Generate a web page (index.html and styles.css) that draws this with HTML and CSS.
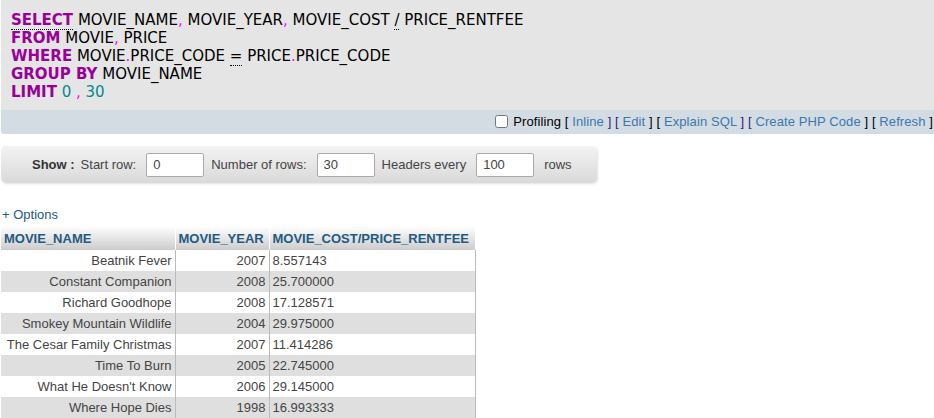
FILE: index.html
```html
<!DOCTYPE html>
<html>
<head>
<meta charset="utf-8">
<link rel="stylesheet" href="styles.css">
</head>
<body>
<div class="sqlbox">
  <div class="sql">
    <div class="line"><span class="kw ab">SELECT</span> MOVIE_NAME<span class="pn">,</span> MOVIE_YEAR<span class="pn">,</span> MOVIE_COST <span class="op ab">/</span> PRICE_RENTFEE</div>
    <div class="line"><span class="kw">FROM</span> MOVIE<span class="pn">,</span> PRICE</div>
    <div class="line"><span class="kw">WHERE</span> MOVIE<span class="pn">.</span>PRICE_CODE <span class="op ab">=</span> PRICE<span class="pn">.</span>PRICE_CODE</div>
    <div class="line"><span class="kw">GROUP BY</span> MOVIE_NAME</div>
    <div class="line"><span class="kw">LIMIT</span> <span class="num">0</span> <span class="pn">,</span> <span class="num">30</span></div>
  </div>
  <div class="tools">
    <input type="checkbox" class="chk"> Profiling <span class="br">[</span> <a class="lnk">Inline</a> <span class="br v">]</span> <span class="br v">[</span> <a class="lnk">Edit</a> <span class="br">]</span> <span class="br">[</span> <a class="lnk">Explain SQL</a> <span class="br v">]</span> <span class="br v">[</span> <a class="lnk">Create PHP Code</a> <span class="br">]</span> <span class="br">[</span> <a class="lnk">Refresh</a> <span class="br">]</span>
  </div>
</div>

<div class="showbar">
  <b class="show">Show :</b>
  <span class="lbl">Start row:</span>
  <input class="field" type="text" value="0">
  <span class="lbl">Number of rows:</span>
  <input class="field" type="text" value="30">
  <span class="lbl">Headers every</span>
  <input class="field" type="text" value="100">
  <span class="lbl rows">rows</span>
</div>

<div class="options"><a>+ Options</a></div>

<table class="data">
  <thead>
    <tr><th class="c1">MOVIE_NAME</th><th class="c2">MOVIE_YEAR</th><th class="c3">MOVIE_COST/PRICE_RENTFEE</th></tr>
  </thead>
  <tbody>
    <tr class="odd"><td class="r">Beatnik Fever</td><td class="r">2007</td><td>8.557143</td></tr>
    <tr class="even"><td class="r">Constant Companion</td><td class="r">2008</td><td>25.700000</td></tr>
    <tr class="odd"><td class="r">Richard Goodhope</td><td class="r">2008</td><td>17.128571</td></tr>
    <tr class="even"><td class="r">Smokey Mountain Wildlife</td><td class="r">2004</td><td>29.975000</td></tr>
    <tr class="odd"><td class="r">The Cesar Family Christmas</td><td class="r">2007</td><td>11.414286</td></tr>
    <tr class="even"><td class="r">Time To Burn</td><td class="r">2005</td><td>22.745000</td></tr>
    <tr class="odd"><td class="r">What He Doesn't Know</td><td class="r">2006</td><td>29.145000</td></tr>
    <tr class="even"><td class="r">Where Hope Dies</td><td class="r">1998</td><td>16.993333</td></tr>
  </tbody>
</table>
</body>
</html>
```

FILE: styles.css
```css
html, body {
  margin: 0;
  padding: 0;
  background: #fff;
  overflow: hidden;
}
body {
  padding-left: 1px;
  font-family: "Liberation Sans", Arial, sans-serif;
  font-size: 13px;
  color: #444;
}
.sqlbox {
  margin-right: -20px;
  background: #e5e5e5;
  border-bottom-left-radius: 4px;
  overflow: hidden;
}
.sql {
  padding: 11px 0 9px 10px;
  font-family: "DejaVu Sans", Verdana, sans-serif;
  font-size: 15px;
  line-height: 18px;
  color: #000;
}
.kw { color: #990099; font-weight: bold; }
.pn { color: #ff00ff; }
.num { color: #008b8b; }
.ab { border-bottom: 1px dotted #000; }
.tools {
  background: #d3dce3;
  height: 24px;
  line-height: 24px;
  text-align: right;
  padding-right: 21px;
  color: #000;
  font-size: 13px;
  letter-spacing: 0.1px;
  white-space: nowrap;
}
.chk {
  margin: 0 2px 0 0;
  width: 13px;
  height: 13px;
  vertical-align: -2px;
}
.lnk { color: #3a78ad; }
.br { color: #000; }
.br.v { color: #3c1a77; }

.showbar {
  margin-top: 12px;
  width: 596px;
  height: 37px;
  box-sizing: border-box;
  display: flex;
  align-items: center;
  padding-left: 31px;
  background: linear-gradient(#f3f3f3, #d9d9d9);
  border-radius: 5px;
  box-shadow: 1px 1px 2px rgba(0,0,0,0.12);
  color: #444;
}
.show { color: #333; margin-right: 6px; }
.lbl { margin-right: 10px; }
.field {
  width: 58px;
  height: 24px;
  box-sizing: border-box;
  border: 1px solid #aaa;
  border-radius: 2px;
  padding: 0 6px;
  font-family: "Liberation Sans", Arial, sans-serif;
  font-size: 13px;
  color: #444;
  margin: 0 7px 0 0;
  background: #fff;
}
.rows { margin-left: 3px; }

.options {
  margin-top: 24px;
  padding-left: 1px;
  height: 16px;
  line-height: 16px;
}
.options a { color: #235a81; }

.data {
  margin-top: 3px;
  border-collapse: collapse;
  color: #444;
  table-layout: fixed;
}
.data th {
  box-sizing: border-box;
  height: 24px;
  padding: 0 3px;
  text-align: left;
  font-weight: bold;
  color: #235a81;
  background: linear-gradient(#ffffff, #cccccc);
  border-right: 1px solid #fff;
  white-space: nowrap;
}
.data th.c1 { width: 174px; }
.data th.c2 { width: 94px; }
.data th.c3 { width: 206px; border-right: 0; }
.data td {
  height: 21px;
  padding: 0 3px;
  border-right: 1px solid #bbb;
  white-space: nowrap;
}
.data td.r { text-align: right; }
.data tr.odd td { background: #fff; }
.data tr.even td { background: #dfdfdf; }
```
